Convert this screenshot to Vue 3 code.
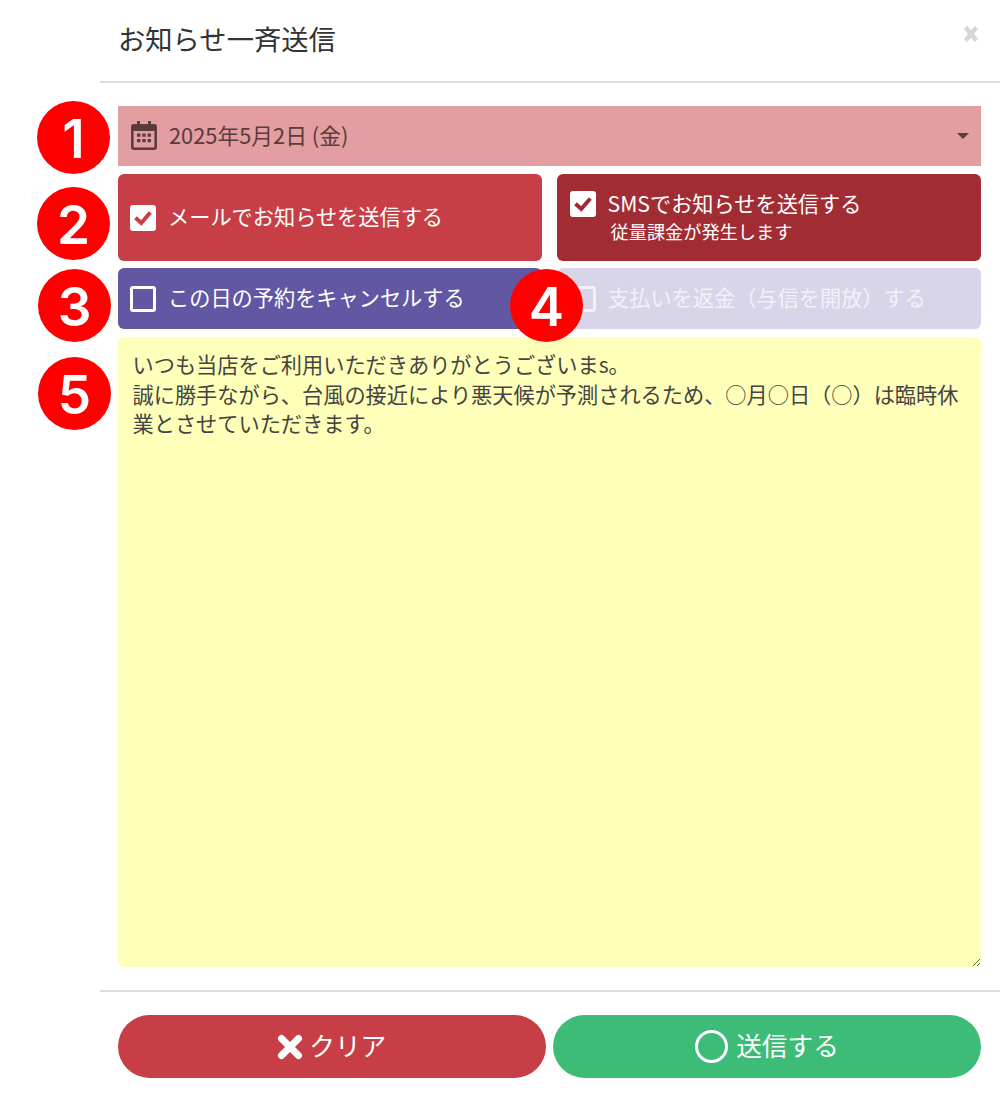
<script setup>
const message = `いつも当店をご利用いただきありがとうございまs。
誠に勝手ながら、台風の接近により悪天候が予測されるため、○月○日（○）は臨時休業とさせていただきます。`
const badges = [
  { n: 1, cls: 'b1' },
  { n: 2, cls: 'b2' },
  { n: 3, cls: 'b3' },
  { n: 4, cls: 'b4' },
  { n: 5, cls: 'b5' },
]
</script>

<template>
  <div class="modal">
    <header class="head">
      <h1 class="title">お知らせ一斉送信</h1>
      <svg class="close" viewBox="0 0 16 18" aria-hidden="true">
        <path d="M2.500 2.500 L13.500 15.500 M13.500 2.500 L2.500 15.500" />
      </svg>
    </header>

    <main class="body">
      <div class="date">
        <svg class="cal" viewBox="0 0 26 29" aria-hidden="true">
          <path fill-rule="evenodd" d="M6 0h3v3h8V0h3v3h3a3 3 0 0 1 3 3v20a3 3 0 0 1-3 3H3a3 3 0 0 1-3-3V6a3 3 0 0 1 3-3h3zM2.600 10v15.400c0 .6.400 1 1 1h18.800c.6 0 1-.4 1-1V10z" />
          <path d="M6 12.500h3.400v3.300H6zM11.300 12.500h3.400v3.300h-3.400zM16.600 12.500H20v3.300h-3.400zM6 18h3.400v3.300H6zM11.300 18h3.400v3.300h-3.400zM16.600 18H20v3.300h-3.400z" />
        </svg>
        <span class="date-text">2025年5月2日 (金)</span>
        <span class="caret"></span>
      </div>

      <div class="row tall">
        <label class="opt red center">
          <span class="box on"><svg viewBox="0 0 26 26"><path d="M5.500 12.700 L11.300 18 L20.300 7.500" /></svg></span>
          <span class="lbl">メールでお知らせを送信する</span>
        </label>
        <label class="opt darkred top">
          <span class="box on"><svg viewBox="0 0 26 26"><path d="M5.500 12.700 L11.300 18 L20.300 7.500" /></svg></span>
          <span class="stack">
            <span>SMSでお知らせを送信する</span>
            <small class="sub">従量課金が発生します</small>
          </span>
        </label>
      </div>

      <div class="row short">
        <label class="opt purple center">
          <span class="box"></span>
          <span class="lbl">この日の予約をキャンセルする</span>
        </label>
        <label class="opt lilac center">
          <span class="box"></span>
          <span class="lbl">支払いを返金（与信を開放）する</span>
        </label>
      </div>

      <textarea class="msg" :value="message"></textarea>
    </main>

    <footer class="foot">
      <button class="btn clear">
        <svg class="x" viewBox="0 0 26 26" aria-hidden="true">
          <path d="M4.500 4.500 L21.500 21.500 M21.500 4.500 L4.500 21.500" />
        </svg>
        <span class="lbl">クリア</span>
      </button>
      <button class="btn send">
        <span class="ring"></span>
        <span class="lbl">送信する</span>
      </button>
    </footer>

    <span v-for="b in badges" :key="b.n" class="badge" :class="b.cls">{{ b.n }}</span>
  </div>
</template>

<style>
html, body { background: #fff; }
</style>

<style scoped>
.modal {
  position: relative;
  width: 900px;
  height: 1099px;
  margin-left: 100px;
  font-family: "Noto Sans CJK JP", "Noto Sans", sans-serif;
  color: #333;
  box-sizing: border-box;
}
.head {
  height: 81px;
  border-bottom: 2px solid #ddd;
  display: flex;
  align-items: flex-start;
  justify-content: space-between;
  padding: 0 21px 0 18px;
}
.title {
  margin: 19px 0 0;
  font-size: 27.300px;
  line-height: 38px;
  font-weight: 400;
  color: #333;
}
.close { width: 16px; height: 18px; margin-top: 25px; }
.close path { fill: none; stroke: #d6d6d6; stroke-width: 4.500; }

.body {
  display: flex;
  flex-direction: column;
  gap: 8px;
  padding: 23px 19px 0 17.500px;
}
.date {
  height: 60px;
  background: #e29ea1;
  display: flex;
  align-items: center;
  padding: 0 12px 0 13.500px;
  color: #5b3b3e;
  font-size: 21.800px;
}
.cal { width: 26px; height: 29px; fill: #5b3b3e; flex: none; margin-top: -1px; }
.date-text { margin-left: 12px; flex: 1; margin-bottom: 4px; }
.caret {
  width: 0; height: 0;
  border-left: 6px solid transparent;
  border-right: 6px solid transparent;
  border-top: 6px solid #5b3b3e;
}
.row {
  display: grid;
  grid-template-columns: 424.500px 424px;
  column-gap: 15px;
}
.tall { height: 87px; margin-bottom: -1px; }
.short { height: 61px; }
.opt {
  display: flex;
  gap: 12px;
  padding: 0 12.500px;
  border-radius: 6px;
  color: #fff;
  font-size: 21.200px;
  line-height: 28px;
}
.lbl { margin-bottom: 4px; }
.center { align-items: center; }
.top { align-items: flex-start; padding-top: 17px; }
.red { background: #c73e46; }
.darkred { background: #a22c33; }
.purple { background: #6257a2; }
.lilac { background: #d9d5e8; color: #f3f1f8; padding-left: 13px; }
.box {
  width: 26px;
  height: 26px;
  flex: none;
  box-sizing: border-box;
  border: 3px solid #fff;
  border-radius: 3px;
}
.lilac .box { border-color: #f3f1f8; }
.box.on { background: #fff; border: 0; }
.box.on svg { display: block; width: 26px; height: 26px; }
.red .box.on svg path { stroke: #c73e46; }
.box.on path { fill: none; stroke: #a22c33; stroke-width: 4; }
.stack { display: flex; flex-direction: column; margin-top: -2px; }
.sub { font-size: 18.200px; line-height: 28px; margin-left: 3px; }

.msg {
  display: block;
  width: 863.500px;
  height: 630px;
  box-sizing: border-box;
  margin: 0;
  border: 0;
  outline: 0;
  border-radius: 6px;
  background: #feffb9;
  color: #444;
  padding: 12px 16px 12px 15px;
  font-family: inherit;
  font-size: 21.200px;
  line-height: 29.500px;
}

.foot {
  margin-top: 23px;
  border-top: 2px solid #ddd;
  padding: 23px 19px 0 17.500px;
  display: grid;
  grid-template-columns: 428.500px 428px;
  column-gap: 7px;
}
.btn {
  height: 63px;
  border: 0;
  padding: 0;
  border-radius: 32px;
  color: #fff;
  font-family: inherit;
  font-size: 25.700px;
  display: flex;
  align-items: center;
  justify-content: center;
  gap: 6px;
}
.clear { background: #c73e46; }
.send { background: #3dbc77; gap: 8px; }
.x { width: 26px; height: 26px; }
.x path { fill: none; stroke: #fff; stroke-width: 7; stroke-linecap: round; }
.ring {
  width: 33px;
  height: 33px;
  box-sizing: border-box;
  border: 3px solid #fff;
  border-radius: 50%;
}

.badge {
  position: absolute;
  width: 73px;
  height: 73px;
  border-radius: 50%;
  background: #fe0000;
  color: #fff;
  font-family: "Inter", "Liberation Sans", sans-serif;
  font-weight: 600;
  font-size: 53px;
  line-height: 76px;
  text-align: center;
}
.b1 { left: -63px; top: 101px; }
.b2 { left: -63px; top: 187px; }
.b3 { left: -62px; top: 269px; }
.b4 { left: 410px; top: 269px; }
.b5 { left: -62px; top: 357px; }
</style>
